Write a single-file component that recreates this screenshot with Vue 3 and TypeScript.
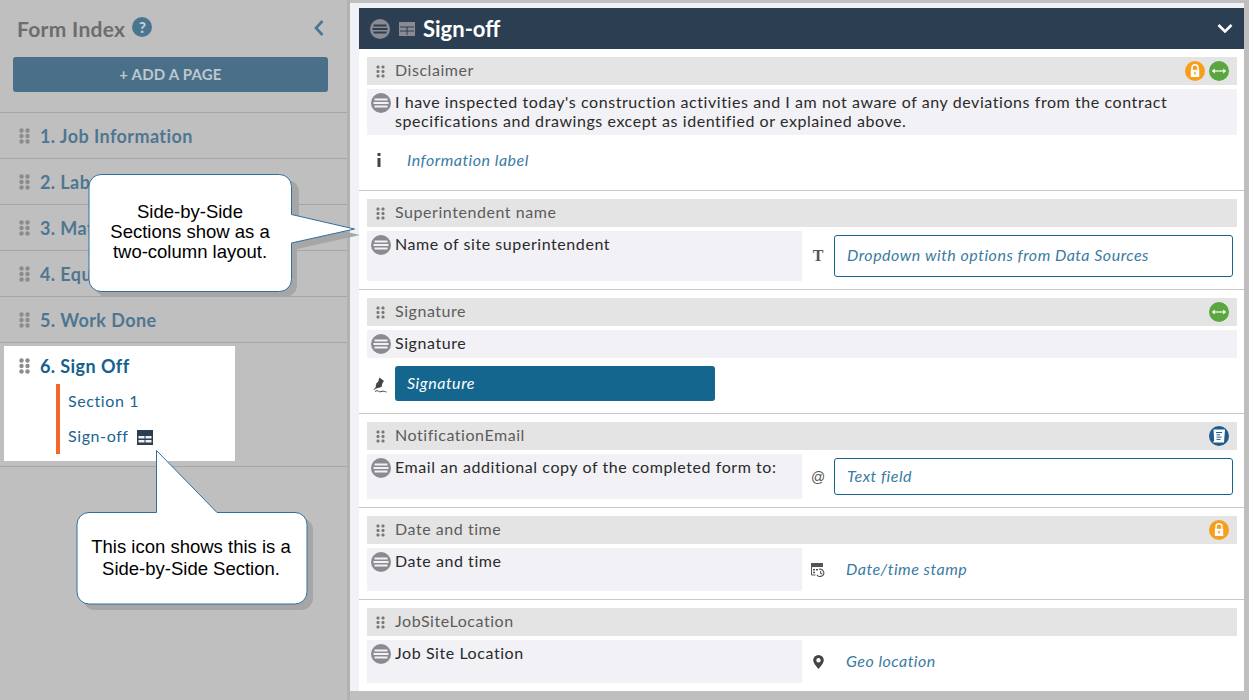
<script setup lang="ts">
type Badge = 'lock' | 'resize' | 'doc'
type Kind = 'info' | 'text' | 'signature' | 'email' | 'stamp' | 'geo'

interface Field {
  title: string
  badges: Badge[]
  label: string
  kind: Kind
  value: string
  boxed?: boolean
  side: boolean
  labelHeight: number
}

const pages = ['1. Job Information', '2. Labour', '3. Materials', '4. Equipment', '5. Work Done']

const fields: Field[] = [
  {
    title: 'Disclaimer',
    badges: ['lock', 'resize'],
    label:
      "I have inspected today's construction activities and I am not aware of any deviations from the contract specifications and drawings except as identified or explained above.",
    kind: 'info',
    value: 'Information label',
    side: false,
    labelHeight: 46
  },
  {
    title: 'Superintendent name',
    badges: [],
    label: 'Name of site superintendent',
    kind: 'text',
    value: 'Dropdown with options from Data Sources',
    boxed: true,
    side: true,
    labelHeight: 50
  },
  {
    title: 'Signature',
    badges: ['resize'],
    label: 'Signature',
    kind: 'signature',
    value: 'Signature',
    side: false,
    labelHeight: 28
  },
  {
    title: 'NotificationEmail',
    badges: ['doc'],
    label: 'Email an additional copy of the completed form to:',
    kind: 'email',
    value: 'Text field',
    boxed: true,
    side: true,
    labelHeight: 45
  },
  {
    title: 'Date and time',
    badges: ['lock'],
    label: 'Date and time',
    kind: 'stamp',
    value: 'Date/time stamp',
    side: true,
    labelHeight: 43
  },
  {
    title: 'JobSiteLocation',
    badges: [],
    label: 'Job Site Location',
    kind: 'geo',
    value: 'Geo location',
    side: true,
    labelHeight: 43
  }
]
</script>

<template>
  <div class="screen">
    <aside class="index">
      <div class="index-head">
        <h2>Form Index</h2>
        <span class="help">?</span>
        <svg class="collapse" width="12" height="18" viewBox="0 0 12 18">
          <path d="M9.5 2 L3 9 L9.5 16" fill="none" stroke="#4a7591" stroke-width="2.6" />
        </svg>
      </div>
      <button class="add-page">+ ADD A PAGE</button>

      <ul class="pages">
        <li v-for="page in pages" :key="page" class="page">
          <svg class="dots" width="11" height="16" viewBox="0 0 11 16">
            <g fill="#8c8c8c">
              <circle cx="2.5" cy="2.5" r="2.2" /><circle cx="8.5" cy="2.5" r="2.2" />
              <circle cx="2.5" cy="8" r="2.2" /><circle cx="8.5" cy="8" r="2.2" />
              <circle cx="2.5" cy="13.5" r="2.2" /><circle cx="8.5" cy="13.5" r="2.2" />
            </g>
          </svg>
          {{ page }}
        </li>
        <li class="page-open">
          <div class="current">
            <div class="current-title">
              <svg class="dots" width="11" height="16" viewBox="0 0 11 16">
                <g fill="#8c8c8c">
                  <circle cx="2.5" cy="2.5" r="2.2" /><circle cx="8.5" cy="2.5" r="2.2" />
                  <circle cx="2.5" cy="8" r="2.2" /><circle cx="8.5" cy="8" r="2.2" />
                  <circle cx="2.5" cy="13.5" r="2.2" /><circle cx="8.5" cy="13.5" r="2.2" />
                </g>
              </svg>
              6. Sign Off
            </div>
            <div class="sections">
              <div class="section-link">Section 1</div>
              <div class="section-link">
                Sign-off
                <svg class="table-icon" width="16" height="15" viewBox="0 0 16 15">
                  <path fill="#2c3e52" d="M0 0h16v15H0z" />
                  <path fill="#eef0f2" d="M1.500 6h6v2.500h-6zM8.500 6h6v2.500h-6zM1.500 10h6v2.500h-6zM8.500 10h6v2.500h-6z" />
                </svg>
              </div>
            </div>
          </div>
        </li>
      </ul>
    </aside>

    <main class="canvas">
      <div class="panel">
        <header class="panel-head">
          <svg width="20" height="20" viewBox="0 0 20 20">
            <circle cx="10" cy="10" r="10" fill="#8a8a90" />
            <path fill="#2c3e52" d="M3.500 5.500h13v2h-13zM2.500 9h15v2h-15zM3.500 12.500h13v2h-13z" />
          </svg>
          <svg class="head-table" width="16" height="14" viewBox="0 0 16 14">
            <path fill="#8a8a90" d="M0 0h16v14H0z" />
            <path fill="#2c3e52" d="M1 4.500h14v1H1zM1 8.500h14v1H1zM7.500 5h1v8h-1z" />
          </svg>
          <span class="head-title">Sign-off</span>
          <svg class="head-chevron" width="16" height="11" viewBox="0 0 16 11">
            <path d="M1.500 2 L8 8.500 L14.500 2" fill="none" stroke="#fff" stroke-width="2.6" />
          </svg>
        </header>

        <section v-for="field in fields" :key="field.title" class="field">
          <div class="field-bar">
            <svg class="bar-dots" width="9" height="13" viewBox="0 0 9 13">
              <g fill="#777">
                <rect x="0.500" y="0.500" width="3" height="3" rx="1.200" /><rect x="5.500" y="0.500" width="3" height="3" rx="1.200" />
                <rect x="0.500" y="5" width="3" height="3" rx="1.200" /><rect x="5.500" y="5" width="3" height="3" rx="1.200" />
                <rect x="0.500" y="9.500" width="3" height="3" rx="1.200" /><rect x="5.500" y="9.500" width="3" height="3" rx="1.200" />
              </g>
            </svg>
            <span class="bar-title">{{ field.title }}</span>
            <span class="badges">
              <template v-for="badge in field.badges" :key="badge">
                <svg v-if="badge === 'lock'" width="20" height="20" viewBox="0 0 20 20">
                  <circle cx="10" cy="10" r="10" fill="#f79f1a" />
                  <path d="M7 9V6.800a3 3 0 0 1 6 0V9" fill="none" stroke="#fff" stroke-width="1.500" />
                  <path fill="#fff" d="M5.800 8.800h8.400v7.200H5.800z" />
                  <rect x="9.200" y="11.200" width="1.600" height="2.200" fill="#f79f1a" />
                </svg>
                <svg v-else-if="badge === 'resize'" width="20" height="20" viewBox="0 0 20 20">
                  <circle cx="10" cy="10" r="10" fill="#5aa63f" />
                  <path d="M4 10h12" stroke="#fff" stroke-width="1.200" />
                  <path fill="#fff" d="M2.800 10l3-2.600v5.200zM17.200 10l-3-2.600v5.200z" />
                </svg>
                <svg v-else width="20" height="20" viewBox="0 0 20 20">
                  <circle cx="10" cy="10" r="10" fill="#1f5b8c" />
                  <path fill="#fff" d="M4.500 3.500h11.500l-1 13H4l1.200-2z" />
                  <path d="M7 6.500h6M7.500 8.800h3.500M7.500 11.100h5M7.500 13.400h4" stroke="#1f5b8c" stroke-width="1" />
                </svg>
              </template>
            </span>
          </div>

          <div class="field-body" :class="{ side: field.side }">
            <div class="field-label" :style="{ height: field.labelHeight + 'px' }">
              <svg class="menu-icon" width="20" height="20" viewBox="0 0 20 20">
                <circle cx="10" cy="10" r="10" fill="#8a8a90" />
                <path fill="#f1f1f6" d="M3.500 5.500h13v2h-13zM2.500 9h15v2h-15zM3.500 12.500h13v2h-13z" />
              </svg>
              <span>{{ field.label }}</span>
            </div>

            <div class="field-input" :class="field.kind">
              <span class="kind-icon">
                <svg v-if="field.kind === 'info'" width="6" height="14" viewBox="0 0 6 14">
                  <path fill="#444" d="M1.500 0h3v3h-3zM1.500 5h3v9h-3z" />
                </svg>
                <span v-else-if="field.kind === 'text'" class="glyph-t">T</span>
                <svg v-else-if="field.kind === 'signature'" class="pen" width="14" height="16" viewBox="0 0 14 16">
                  <path fill="#444" d="M6.500 0.500l4.500 3.500-1.500 2L8.500 10 3 11.500 1 13l-.5-.5 2-2L3.500 6l1.500-1z" />
                  <path d="M2 14.500c1.500-1 2.500-1 3.500-.2s2 .5 3.500 0 3 .3 4.500.7" fill="none" stroke="#444" stroke-width="1" />
                </svg>
                <span v-else-if="field.kind === 'email'" class="glyph-at">@</span>
                <svg v-else-if="field.kind === 'stamp'" width="14" height="14" viewBox="0 0 14 14">
                  <path fill="#555" d="M0 0h12v4H0z" />
                  <path fill="none" stroke="#555" stroke-width="1" d="M.5 4v8h4" />
                  <path fill="#555" d="M2 6h2v1.500H2zM2 8.800h2v1.500H2zM5 6h2v1.500H5z" />
                  <path fill="none" stroke="#555" stroke-width="1.100" d="M8 6.300a3.700 3.700 0 1 1-2 5.600M9.600 8v2.200l1.600.8" />
                </svg>
                <svg v-else width="11" height="14" viewBox="0 0 11 14">
                  <path fill="#444" fill-rule="evenodd" d="M5.500 0A5.300 5.300 0 0 0 .2 5.300C.2 8.600 5.500 14 5.500 14s5.300-5.400 5.300-8.700A5.300 5.300 0 0 0 5.500 0zm0 7.400a2.200 2.200 0 1 1 0-4.400 2.200 2.200 0 0 1 0 4.400z" />
                </svg>
              </span>
              <div v-if="field.boxed" class="box">{{ field.value }}</div>
              <div v-else-if="field.kind === 'signature'" class="sign-btn">{{ field.value }}</div>
              <div v-else class="plain">{{ field.value }}</div>
            </div>
          </div>
        </section>
      </div>
    </main>

    <svg class="callouts" width="1249" height="700" viewBox="0 0 1249 700">
      <path
        fill="#a6a6a6"
        d="M107 180H287a12 12 0 0 1 12 12V221L360 235 297 249V285a12 12 0 0 1-12 12H107a12 12 0 0 1-12-12V192a12 12 0 0 1 12-12Z"
      />
      <path
        fill="#fff"
        stroke="#2f6f9f"
        d="M101 174.500H279.500a12 12 0 0 1 12 12V214.500L354.500 229 291.500 243V279.500a12 12 0 0 1-12 12H101a12 12 0 0 1-12-12V186.500a12 12 0 0 1 12-12Z"
      />
      <text class="callout-text" x="190" y="218" text-anchor="middle">Side-by-Side</text>
      <text class="callout-text" x="190" y="238" text-anchor="middle">Sections show as a</text>
      <text class="callout-text" x="190" y="258" text-anchor="middle">two-column layout.</text>

      <path
        fill="#a6a6a6"
        d="M95 518H301a12 12 0 0 1 12 12V598a12 12 0 0 1-12 12H95a12 12 0 0 1-12-12V530a12 12 0 0 1 12-12Z"
      />
      <path
        fill="#fff"
        stroke="#2f6f9f"
        d="M89 512.500H156.500L156.500 450.500 217 512.500H295a12 12 0 0 1 12 12V592a12 12 0 0 1-12 12H89a12 12 0 0 1-12-12V524.500a12 12 0 0 1 12-12Z"
      />
      <text class="callout-text" x="191" y="553" text-anchor="middle">This icon shows this is a</text>
      <text class="callout-text" x="191" y="575" text-anchor="middle">Side-by-Side Section.</text>
    </svg>
  </div>
</template>

<style>
html,
body {
  margin: 0;
  background: #bfbfbf;
}
</style>

<style scoped>
.screen {
  position: relative;
  display: flex;
  width: 1249px;
  height: 700px;
  overflow: hidden;
  background: #bfbfbf;
  font-family: Lato, 'Open Sans', sans-serif;
  box-sizing: border-box;
}

.index {
  flex: 0 0 347px;
  height: 700px;
  border-right: 3px solid #b2b2b2;
  box-sizing: content-box;
}

.index-head {
  display: flex;
  align-items: center;
  height: 56px;
  padding-left: 17px;
  padding-right: 22px;
  box-sizing: border-box;
}

.index-head h2 {
  margin: 0;
  font-size: 21px;
  font-weight: 700;
  letter-spacing: 0.3px;
  color: #6d6d6d;
}

.help {
  width: 20px;
  height: 20px;
  margin-left: 7px;
  margin-top: -3px;
  border-radius: 50%;
  background: #4a7591;
  color: #c4cfd6;
  font-size: 15px;
  font-weight: 900;
  line-height: 20px;
  text-align: center;
}

.collapse {
  margin-left: auto;
}

.add-page {
  display: block;
  width: 315px;
  height: 35px;
  margin: 1px 0 0 13px;
  padding: 0 0 2px;
  border: 0;
  border-radius: 3px;
  background: #4a7089;
  color: #bdc8cf;
  font: 700 15px Lato, sans-serif;
  letter-spacing: 0.2px;
}

.pages {
  margin: 20px 0 0;
  padding: 0;
  list-style: none;
}

.page {
  display: flex;
  align-items: center;
  height: 46px;
  padding-left: 19px;
  border-top: 1px solid #a6a6a6;
  box-sizing: border-box;
  font-size: 18px;
  font-weight: 700;
  letter-spacing: 0.42px;
  color: #4f7691;
}

.dots {
  margin-right: 10px;
  flex: none;
}

.page-open {
  height: 125px;
  padding: 3px 0 0 4px;
  border-top: 1px solid #a6a6a6;
  border-bottom: 1px solid #a6a6a6;
  box-sizing: border-box;
}

.current {
  width: 231px;
  height: 115px;
  padding: 10px 0 0 15px;
  background: #fff;
  box-sizing: border-box;
}

.current-title {
  display: flex;
  align-items: center;
  height: 20px;
  font-size: 18px;
  font-weight: 700;
  letter-spacing: 0.42px;
  color: #14608f;
}

.sections {
  margin: 8px 0 0 37px;
  border-left: 4px solid #f4672a;
  height: 70px;
  box-sizing: border-box;
}

.section-link {
  display: flex;
  align-items: center;
  height: 35px;
  padding-left: 8px;
  padding-bottom: 3px;
  box-sizing: border-box;
  font-size: 16px;
  letter-spacing: 0.6px;
  color: #1a6491;
}

.table-icon {
  margin-left: 8px;
  margin-top: 4px;
}

.canvas {
  flex: none;
  width: 894px;
  height: 688px;
  margin-top: 3px;
  padding: 5px 0 0 9px;
  background: #f1f1f8;
  box-sizing: border-box;
}

.panel {
  width: 885px;
  height: 683px;
  background: #fff;
}

.panel-head {
  display: flex;
  align-items: center;
  height: 41px;
  padding: 0 11px;
  background: #2c3e52;
  box-sizing: border-box;
}

.head-table {
  margin-left: 9px;
}

.head-title {
  margin-left: 8px;
  font-size: 22px;
  font-weight: 700;
  color: #fff;
}

.head-chevron {
  margin-left: auto;
  margin-top: -1px;
}

.field {
  padding: 8px 7px 8px 8px;
  border-bottom: 1px solid #c9c9c9;
}

.field:last-child {
  border-bottom: 0;
}

.field-bar {
  display: flex;
  align-items: center;
  height: 28px;
  padding: 0 8px 0 9px;
  background: #e4e4e4;
}

.bar-title {
  margin-left: 10px;
  margin-top: -4px;
  font-size: 16px;
  letter-spacing: 0.55px;
  color: #5c5c5c;
}

.badges {
  display: flex;
  gap: 4px;
  margin-left: auto;
}

.badges svg {
  display: block;
}

.field-body {
  margin-top: 4px;
}

.field-body.side {
  display: flex;
}

.field-label {
  position: relative;
  padding: 3px 16px 0 28px;
  background: #f1f1f6;
  box-sizing: border-box;
  font-size: 16px;
  font-weight: 400;
  line-height: 19px;
  letter-spacing: 0.57px;
  color: #2a2a2a;
}

.side .field-label {
  flex: 0 0 435px;
}

.menu-icon {
  position: absolute;
  left: 4px;
  top: 4px;
}

.field-input {
  display: flex;
  align-items: center;
  height: 47px;
}

.side .field-input {
  flex: 1;
  height: auto;
}

.kind-icon {
  display: flex;
  align-items: center;
  justify-content: center;
  flex: 0 0 24px;
  color: #555;
}

.side .kind-icon {
  flex: 0 0 32px;
}

.info .kind-icon {
  margin-top: 3px;
}

.pen {
  margin-right: 6px;
  margin-top: 6px;
}

.glyph-t {
  font: 700 16px 'Liberation Serif', serif;
}

.glyph-at {
  font: 14px 'Liberation Sans', sans-serif;
}

.plain,
.box {
  margin-top: -2px;
  font-size: 16px;
  font-style: italic;
  letter-spacing: 0.5px;
  color: #3a7ba3;
}

.plain {
  margin-left: 12px;
}

.info .plain {
  margin-top: 2px;
  margin-left: 16px;
}

.box {
  width: 399px;
  height: 42px;
  margin-top: 0;
  padding-left: 12px;
  border: 1px solid #14668f;
  border-radius: 3px;
  line-height: 38px;
  box-sizing: border-box;
}

.email .box {
  height: 37px;
  line-height: 33px;
}

.sign-btn {
  width: 320px;
  height: 35px;
  margin-top: 8px;
  margin-bottom: 4px;
  padding-left: 12px;
  border-radius: 3px;
  background: #14668f;
  color: #fff;
  font-size: 16px;
  font-style: italic;
  letter-spacing: 0.55px;
  line-height: 33px;
  box-sizing: border-box;
}

.signature {
  margin-left: 4px;
}

.callouts {
  position: absolute;
  left: 0;
  top: 0;
  pointer-events: none;
}

.callout-text {
  font-family: 'Liberation Sans', Arial, sans-serif;
  font-size: 18.5px;
  fill: #000;
}
</style>
